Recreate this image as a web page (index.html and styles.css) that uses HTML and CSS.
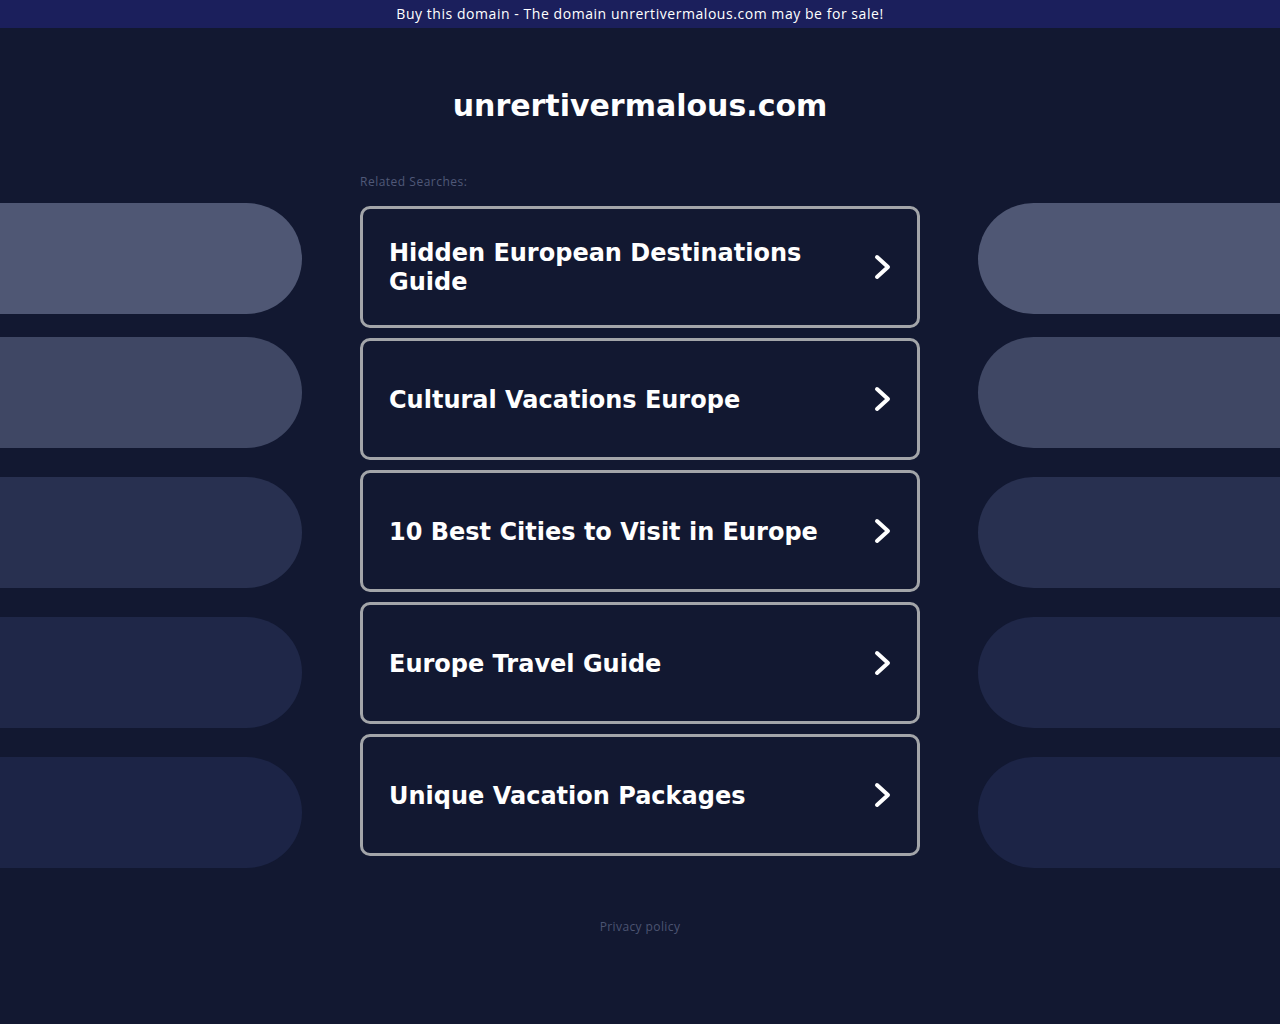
FILE: index.html
```html
<!DOCTYPE html>
<html lang="en">
<head>
<meta charset="utf-8">
<title>unrertivermalous.com</title>
<link rel="stylesheet" href="styles.css">
</head>
<body>
<div class="topbar">Buy this domain - The domain unrertivermalous.com may be for sale!</div>
<h1 class="title">unrertivermalous.com</h1>
<div class="main">
  <div class="side side-left">
    <div class="pill p1"></div>
    <div class="pill p2"></div>
    <div class="pill p3"></div>
    <div class="pill p4"></div>
    <div class="pill p5"></div>
  </div>
  <div class="center">
    <div class="label">Related Searches:</div>
    <div class="cards">
      <a class="card" href="#"><span class="card-text">Hidden European Destinations Guide</span><svg class="chev" viewBox="0 0 20 28" width="20" height="28"><polyline points="4,4 15,14 4,24" fill="none" stroke="#fff" stroke-width="4" stroke-linecap="round" stroke-linejoin="round"/></svg></a>
      <a class="card" href="#"><span class="card-text">Cultural Vacations Europe</span><svg class="chev" viewBox="0 0 20 28" width="20" height="28"><polyline points="4,4 15,14 4,24" fill="none" stroke="#fff" stroke-width="4" stroke-linecap="round" stroke-linejoin="round"/></svg></a>
      <a class="card" href="#"><span class="card-text">10 Best Cities to Visit in Europe</span><svg class="chev" viewBox="0 0 20 28" width="20" height="28"><polyline points="4,4 15,14 4,24" fill="none" stroke="#fff" stroke-width="4" stroke-linecap="round" stroke-linejoin="round"/></svg></a>
      <a class="card" href="#"><span class="card-text">Europe Travel Guide</span><svg class="chev" viewBox="0 0 20 28" width="20" height="28"><polyline points="4,4 15,14 4,24" fill="none" stroke="#fff" stroke-width="4" stroke-linecap="round" stroke-linejoin="round"/></svg></a>
      <a class="card" href="#"><span class="card-text">Unique Vacation Packages</span><svg class="chev" viewBox="0 0 20 28" width="20" height="28"><polyline points="4,4 15,14 4,24" fill="none" stroke="#fff" stroke-width="4" stroke-linecap="round" stroke-linejoin="round"/></svg></a>
    </div>
  </div>
  <div class="side side-right">
    <div class="pill p1"></div>
    <div class="pill p2"></div>
    <div class="pill p3"></div>
    <div class="pill p4"></div>
    <div class="pill p5"></div>
  </div>
</div>
<div class="footer"><a href="#" class="privacy">Privacy policy</a></div>
</body>
</html>
```

FILE: styles.css
```css
html, body {
  margin: 0;
  padding: 0;
  background: #121831;
}
body {
  font-family: "Open Sans", "Liberation Sans", sans-serif;
  min-height: 1024px;
}
.topbar {
  height: 28px;
  line-height: 27px;
  background: #1b1f5c;
  color: #ffffff;
  text-align: center;
  font-size: 14px;
  font-weight: 500;
  letter-spacing: 0.55px;
}
.title {
  margin: 0;
  padding-top: 60px;
  height: 35px;
  line-height: 35px;
  text-align: center;
  color: #ffffff;
  font-family: "DejaVu Sans", sans-serif;
  font-weight: bold;
  font-size: 30px;
}
.main {
  margin-top: 52px;
  display: grid;
  grid-template-columns: 302px 560px 302px;
  column-gap: 58px;
  align-items: start;
}
.side {
  display: flex;
  flex-direction: column;
  padding-top: 28px;
}
.pill {
  height: 111px;
  margin-bottom: 29px;
}
.pill.p1 { background: #4f5774; margin-bottom: 23px; }
.pill.p2 { background: #3f4764; }
.pill.p3 { background: #283050; }
.pill.p4 { background: #1f2748; }
.pill.p5 { background: #1c2446; }
.side-left .pill { border-radius: 0 56px 56px 0; }
.side-right .pill { border-radius: 56px 0 0 56px; }
.label {
  font-size: 12px;
  line-height: 14px;
  color: #505878;
  height: 14px;
  margin-bottom: 17px;
  letter-spacing: 0.5px;
}
.cards {
  display: flex;
  flex-direction: column;
  gap: 10px;
}
.card {
  box-sizing: border-box;
  height: 122px;
  border: 3px solid #a3a5a9;
  border-radius: 10px;
  display: flex;
  align-items: center;
  justify-content: space-between;
  padding: 0 24px 0 26px;
  text-decoration: none;
  color: #ffffff;
}
.card-text {
  font-family: "DejaVu Sans", sans-serif;
  font-weight: bold;
  font-size: 24px;
  line-height: 29px;
  max-width: 440px;
  padding-top: 2px;
}
.chev {
  flex: none;
}
.footer {
  margin-top: 21px;
  text-align: center;
  line-height: 14px;
}
.privacy {
  font-size: 12px;
  color: #4c5472;
  text-decoration: none;
  letter-spacing: 0.4px;
}
```
